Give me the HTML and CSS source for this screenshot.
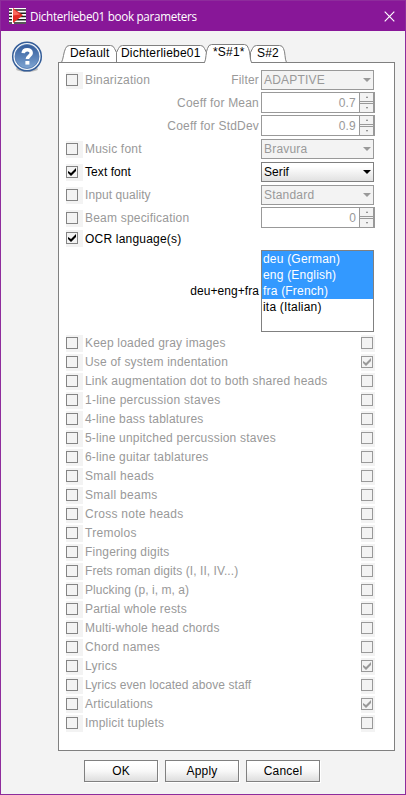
FILE: index.html
```
<!DOCTYPE html>
<html lang="en">
<head>
<meta charset="utf-8">
<title>Dichterliebe01 book parameters</title>
<link rel="stylesheet" href="styles.css">
</head>
<body>
<div class="window">
  <header class="titlebar">
    <svg class="app-icon" width="17" height="16" viewBox="0 0 17 16"><path fill="#fff" d="M0 0h17v16H0z"/><path stroke="#222" stroke-width="1.5" d="M0 2h17M0 5.250h17M0 8.500h17M0 11.750h17M0 15h17"/><path fill="#fff" d="M3 0h2v16H3z"/><path fill="#e22a24" d="M4 0l10 7.200L4 15z"/><path fill="#fa6a5c" d="M4 1l7 5.500-7 1z"/></svg>
    <h1>Dichterliebe01 book parameters</h1>
    <svg class="close" width="11" height="11" viewBox="0 0 11 11"><path stroke="#fff" stroke-width="1.15" d="M.7.7l9.6 9.6M10.3.7L.7 10.3"/></svg>
  </header>
  <main class="content">
    <svg class="help" width="32" height="33" viewBox="0 0 32 33">
      <defs><linearGradient id="blue" x2="0" y2="1"><stop stop-color="#315b9b"/><stop offset="1" stop-color="#7fa5d2"/></linearGradient></defs>
      <ellipse cx="16" cy="28" rx="11" ry="3" fill="#bbb"/>
      <circle cx="16" cy="15.500" r="14.300" fill="#f4f8fc" stroke="#345d98" stroke-width="1.500"/>
      <circle cx="16" cy="15.500" r="12" fill="url(#blue)" stroke="#4b74ad" stroke-width=".8"/>
      <path d="M12.200 12.200c.2-4.600 8-4.600 8-.3 0 3-3.800 3.200-3.800 6.100" fill="none" stroke="#fff" stroke-width="3.500"/><path fill="#fff" d="M14.400 20h4v3.600h-4z"/>
    </svg>
    <section class="tabbed">
      <nav class="tabs">
        <svg class="tab-lines" width="337" height="19" viewBox="0 0 337 19">
          <g fill="#fff" stroke="#808080">
            <path d="M3.500 18.500c2-4 2-10 4-14q1-3 4-3h41q3 0 4 3l2 4v10"/>
            <path d="M58.500 18.500v-10l2-4q1-3 4-3h78q3 0 4 3l2 4v10"/>
            <path d="M192.500 8.500l2-4q1-3 4-3h23q3 0 4 3c2 4 1 10 3 14h-36z"/>
            <path d="M0 18.500h337"/>
            <path d="M146.500 18.500c2-4 1-10 3-14q1-4 4-4h33q3 0 4 4c2 4 1 10 3 14"/>
          </g>
          <path d="M147 18.500h46" stroke="#fff"/>
        </svg>
        <span class="tab t1">Default</span><span class="tab t2">Dichterliebe01</span><span class="tab t3">*S#1*</span><span class="tab t4">S#2</span>
      </nav>
      <div class="panel">
        <div class="settings">
          <div class="field"><i class="check"></i><span class="name">Binarization</span><span class="hint">Filter</span><div class="combo"><span>ADAPTIVE</span></div></div>
          <div class="field"><span class="hint">Coeff for Mean</span><div class="spinner"><span>0.7</span><b class="arrows"><i class="up"></i><i class="down"></i></b></div></div>
          <div class="field"><span class="hint">Coeff for StdDev</span><div class="spinner"><span>0.9</span><b class="arrows"><i class="up"></i><i class="down"></i></b></div></div>
          <div class="field"><i class="check"></i><span class="name">Music font</span><div class="combo"><span>Bravura</span></div></div>
          <div class="field on"><i class="check"><svg width="8" height="8" viewBox="0 0 8 8"><path d="M0 3l3 2 5-5v3L3 8 0 5z"/></svg></i><span class="name tight">Text font</span><div class="combo"><span class="tight">Serif</span></div></div>
          <div class="field"><i class="check"></i><span class="name tight">Input quality</span><div class="combo"><span>Standard</span></div></div>
          <div class="field"><i class="check"></i><span class="name">Beam specification</span><div class="spinner"><span>0</span><b class="arrows"><i class="up"></i><i class="down"></i></b></div></div>
          <div class="field on ocr"><i class="check"><svg width="8" height="8" viewBox="0 0 8 8"><path d="M0 3l3 2 5-5v3L3 8 0 5z"/></svg></i><span class="name">OCR language(s)</span></div>
          <div class="languages"><span class="hint tight">deu+eng+fra</span><ul><li class="sel">deu (German)</li><li class="sel">eng (English)</li><li class="sel">fra (French)</li><li>ita (Italian)</li></ul></div>
        </div>
        <div class="switches">
          <div class="row"><i class="check"></i><span>Keep loaded gray images</span><i class="check value"></i></div>
          <div class="row"><i class="check"></i><span>Use of system indentation</span><i class="check value"><svg width="8" height="8" viewBox="0 0 8 8"><path d="M0 3l3 2 5-5v3L3 8 0 5z"/></svg></i></div>
          <div class="row"><i class="check"></i><span>Link augmentation dot to both shared heads</span><i class="check value"></i></div>
          <div class="row"><i class="check"></i><span class="loose">1-line percussion staves</span><i class="check value"></i></div>
          <div class="row"><i class="check"></i><span>4-line bass tablatures</span><i class="check value"></i></div>
          <div class="row"><i class="check"></i><span>5-line unpitched percussion staves</span><i class="check value"></i></div>
          <div class="row"><i class="check"></i><span>6-line guitar tablatures</span><i class="check value"></i></div>
          <div class="row"><i class="check"></i><span class="loose">Small heads</span><i class="check value"></i></div>
          <div class="row"><i class="check"></i><span class="loose">Small beams</span><i class="check value"></i></div>
          <div class="row"><i class="check"></i><span class="loose">Cross note heads</span><i class="check value"></i></div>
          <div class="row"><i class="check"></i><span class="loose">Tremolos</span><i class="check value"></i></div>
          <div class="row"><i class="check"></i><span>Fingering digits</span><i class="check value"></i></div>
          <div class="row"><i class="check"></i><span class="tight">Frets roman digits (I, II, IV...)</span><i class="check value"></i></div>
          <div class="row"><i class="check"></i><span class="tight">Plucking (p, i, m, a)</span><i class="check value"></i></div>
          <div class="row"><i class="check"></i><span>Partial whole rests</span><i class="check value"></i></div>
          <div class="row"><i class="check"></i><span>Multi-whole head chords</span><i class="check value"></i></div>
          <div class="row"><i class="check"></i><span class="loose">Chord names</span><i class="check value"></i></div>
          <div class="row"><i class="check"></i><span>Lyrics</span><i class="check value"><svg width="8" height="8" viewBox="0 0 8 8"><path d="M0 3l3 2 5-5v3L3 8 0 5z"/></svg></i></div>
          <div class="row"><i class="check"></i><span class="tight">Lyrics even located above staff</span><i class="check value"></i></div>
          <div class="row"><i class="check"></i><span>Articulations</span><i class="check value"><svg width="8" height="8" viewBox="0 0 8 8"><path d="M0 3l3 2 5-5v3L3 8 0 5z"/></svg></i></div>
          <div class="row"><i class="check"></i><span>Implicit tuplets</span><i class="check value"></i></div>
        </div>
      </div>
    </section>
  </main>
  <footer class="actions"><button>OK</button><button>Apply</button><button>Cancel</button></footer>
</div>
</body>
</html>
```
FILE: styles.css
```
*, *::before, *::after { box-sizing: border-box; }
body { margin: 0; font: 12px/16px "Liberation Sans", Arial, sans-serif; letter-spacing: .2px; color: #000; }
.window { width: 406px; height: 795px; background: #f3f3f3; border: 1px solid #8e2c9c; overflow: hidden; }
.titlebar { height: 30px; background: #881798; display: flex; align-items: center; padding: 0 10px 0 8px; }
.app-icon { flex: none; }
.titlebar h1 { margin: 0 0 0 4px; flex: 1; font: 11.7px/16px "Open Sans", "Noto Sans", sans-serif; letter-spacing: -.31px; color: #fff; white-space: nowrap; }
.content { display: flex; padding: 10px 10px 0; }
.help { flex: none; margin: 0 15px 0 0; }
.tabbed { width: 337px; flex: none; padding-top: 3px; }
.tabs { position: relative; height: 19px; display: flex; align-items: flex-start; padding: 1px 0 0 12px; }
.tab-lines { position: absolute; left: 0; top: 0; }
.tab { position: relative; white-space: nowrap; }
.t1 { width: 51px; }
.t2 { width: 92px; }
.t3 { width: 44px; top: -1px; }
.panel { height: 688px; background: #fff; border: 1px solid #808080; border-top: 0; padding: 5px 0 0 7px; }
.field { height: 23px; display: flex; align-items: center; color: #999; width: 310px; }
.field.on { color: #000; }
.check { flex: none; width: 17px; height: 17px; background: #f3f3f3; position: relative; }
.check::before { content: ""; position: absolute; left: 0; top: 2px; width: 12px; height: 12px; border: 1px solid #848484; }
.check.value::before { border-color: #999; }
.check svg { position: absolute; left: 2px; top: 4px; fill: #999; }
.on .check svg { fill: #000; }
.field .check { margin-top: 1px; }
.field:not(.ocr) .check { margin-top: 2px; }
.name { margin-left: 2px; }
.tight { letter-spacing: .07px; }
.loose { letter-spacing: .28px; }
.hint { margin-left: auto; padding-right: 2px; white-space: nowrap; }
.combo, .spinner { flex: none; width: 113px; height: 20px; border: 1px solid #999; background: #f3f3f3; margin-right: 2px; }
.name + .combo, .name + .spinner { margin-left: auto; }
.combo { padding: 1px 5px 0 2px; display: flex; justify-content: space-between; align-items: center; }
.combo::after { content: ""; border: 4px solid transparent; border-top-color: #999; border-bottom: 0; margin-right: -3px; }
.on .combo { background: linear-gradient(#fff 20%, #e1e1e1); border-color: #808080; }
.on .combo::after { border-top-color: #000; }
.spinner { width: 114px; height: 21px; background: #fff; margin-right: 1px; display: flex; }
.spinner > span { flex: 1; text-align: right; padding: 2px 3px 0 0; }
.arrows { width: 15px; border-left: 1px solid #999; border-right: 1px solid #999; display: flex; flex-direction: column; justify-content: space-between; background: #f3f3f3; }
.arrows i { height: 9px; border-bottom: 1px solid #999; display: flex; align-items: center; justify-content: center; }
.arrows .down { border: 0; border-top: 1px solid #999; }
.arrows i::after { content: ""; border: 1.5px solid transparent; }
.arrows .up::after { border-bottom: 2px solid #777; border-top: 0; }
.arrows .down::after { border-top: 2px solid #777; border-bottom: 0; }
.ocr { height: 20px; align-items: flex-start; }
.ocr .name { margin-top: 2px; }
.languages { height: 82px; display: flex; align-items: center; width: 308px; margin-top: 1px; }
.languages ul { list-style: none; margin: 0; padding: 0; width: 113px; height: 82px; border: 1px solid #808080; }
.languages li { height: 16px; padding-left: 1px; }
.languages .sel { background: #3399ff; color: #fff; }
.switches { padding-top: 3px; width: 312px; }
.row { height: 19px; display: flex; align-items: flex-start; color: #999; white-space: nowrap; }
.row span { margin-left: 2px; }
.row .value { margin-left: auto; width: 14px; margin-right: 3px; }
.actions { display: flex; gap: 7px; padding: 9px 0 0 83px; }
.actions button { width: 74px; height: 22px; padding: 0; border: 1px solid #808080; background: linear-gradient(#fff 10%, #f8f8f8 50%, #dedede); box-shadow: 1px 1px #fff; font: inherit; letter-spacing: inherit; color: #000; }
```
